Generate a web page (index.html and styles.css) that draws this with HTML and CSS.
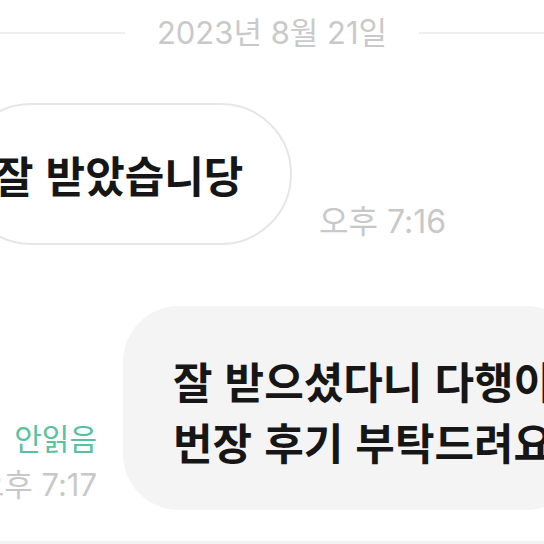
FILE: index.html
```html
<!DOCTYPE html>
<html lang="ko">
<head>
    <meta charset="UTF-8">
    <meta name="viewport" content="width=device-width, initial-scale=1.0">
    <title>채팅</title>
    <link rel="stylesheet" href="styles.css">
</head>
<body>
    <div class="chat">
        <div class="date-divider">
            <span class="date-line"></span>
            <span class="date-text">2023년 8월 21일</span>
            <span class="date-line"></span>
        </div>

        <div class="row received">
            <div class="bubble bubble-in">잘 받았습니당</div>
            <div class="time">오후 7:16</div>
        </div>

        <div class="row sent">
            <div class="meta">
                <span class="unread">안읽음</span>
                <span class="time">오후 7:17</span>
            </div>
            <div class="bubble bubble-out">잘 받으셨다니 다행이<br>번장 후기 부탁드려요</div>
        </div>

        <div class="composer"></div>
    </div>
</body>
</html>
```

FILE: styles.css
```css
html, body {
    margin: 0;
    padding: 0;
    background-color: #fff;
}
body {
    width: 544px;
    height: 544px;
    overflow: hidden;
    font-family: 'Noto Sans CJK KR', 'Noto Sans', sans-serif;
    color: #161616;
}
.chat {
    display: flex;
    flex-direction: column;
}
.date-divider {
    display: flex;
    align-items: center;
    gap: 32px;
    height: 34px;
    margin-top: 16px;
}
.date-line {
    flex: 1;
    height: 2px;
    background-color: #efefef;
}
.date-text {
    font-family: 'Inter', 'Noto Sans CJK KR', sans-serif;
    font-size: 31px;
    line-height: 34px;
    color: #c9c9c9;
    white-space: nowrap;
}
.row {
    display: flex;
    align-items: flex-end;
}
.received {
    margin-top: 53px;
    margin-left: -40px;
    gap: 27px;
}
.bubble {
    display: flex;
    align-items: center;
    box-sizing: border-box;
    font-size: 43px;
    font-weight: 700;
    white-space: nowrap;
    flex-shrink: 0;
}
.bubble-in {
    height: 142px;
    width: 332px;
    padding: 0 30px 0 32px;
    border: 2px solid #e6e6e6;
    border-radius: 71px;
    background-color: #fff;
}
.time {
    font-family: 'Inter', 'Noto Sans CJK KR', sans-serif;
    font-size: 32px;
    line-height: 34px;
    color: #c8c8c8;
    white-space: nowrap;
}
.received .time {
    margin-bottom: 6px;
}
.sent {
    margin-top: 61px;
    gap: 26px;
}
.meta {
    width: 97px;
    flex-shrink: 0;
    display: flex;
    flex-direction: column;
    align-items: flex-end;
    gap: 14px;
    margin-bottom: 8px;
}
.unread {
    font-size: 30px;
    line-height: 34px;
    color: #58c29e;
    white-space: nowrap;
}
.meta .time {
    font-size: 31px;
}
.bubble-out {
    height: 204px;
    width: 460px;
    padding: 6px 0 0 50px;
    border-radius: 56px;
    background-color: #f4f4f4;
    line-height: 61px;
}
.composer {
    margin-top: 31px;
    height: 20px;
    background-color: #f3f3f3;
}
```
